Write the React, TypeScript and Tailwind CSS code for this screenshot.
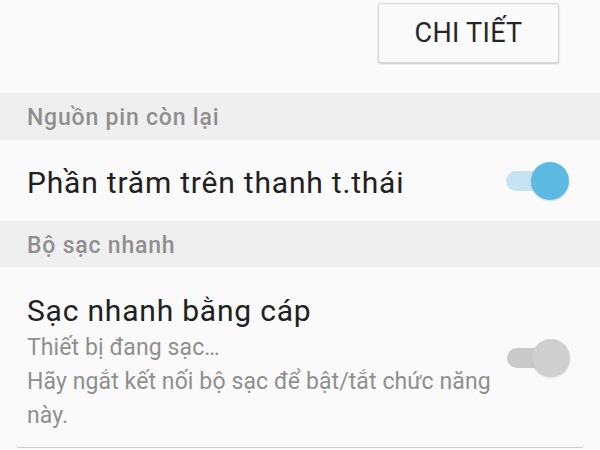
import React from "react";

function Toggle({ on }: { on: boolean }) {
  return (
    <div className="relative w-[64px] h-[38px] shrink-0">
      <div
        className={`absolute left-0 top-[9px] w-[44px] h-[20px] rounded-full ${
          on ? "bg-[#c4e4f2]" : "bg-[#c9c9c9]"
        }`}
      />
      <div
        className={`absolute left-[25px] top-0 w-[38px] h-[38px] rounded-full ${
          on ? "bg-[#5cb9e1] shadow-[0_1px_2px_rgba(0,0,0,0.15)]" : "bg-[#cfcfcf] shadow-[0_1px_2px_rgba(0,0,0,0.12)]"
        }`}
      />
    </div>
  );
}

export default function App() {
  return (
    <div
      className="w-[600px] h-[450px] overflow-hidden bg-[#fafafa] flex flex-col"
      style={{ fontFamily: "Roboto, 'Noto Sans', sans-serif" }}
    >
      <div className="h-[93px] shrink-0 flex justify-end items-start pr-[41px] pt-[3px]">
        <div className="w-[181px] h-[60px] rounded-[3px] border border-[#d4d4d4] bg-[#fafafa] shadow-[0_1px_2px_rgba(0,0,0,0.2)] flex items-center justify-center text-[27px] text-[#262626] tracking-[0.3px]">
          CHI TIẾT
        </div>
      </div>
      <div className="h-[47px] shrink-0 bg-[#efefef] flex items-center pl-[27px] pt-[4px] text-[23px] font-medium tracking-[0.8px] text-[#8f8f8f]">
        Nguồn pin còn lại
      </div>
      <div className="h-[81px] shrink-0 flex items-center justify-between pl-[27px] pr-[30px]">
        <span className="text-[30px] tracking-[0.8px] text-[#212121] pt-[3px]">Phần trăm trên thanh t.thái</span>
        <Toggle on />
      </div>
      <div className="h-[46px] shrink-0 bg-[#efefef] flex items-center pl-[27px] pt-[4px] text-[23px] font-medium tracking-[0.8px] text-[#8f8f8f]">
        Bộ sạc nhanh
      </div>
      <div className="flex items-start justify-between pl-[27px] pr-[30px] pt-[23px]">
        <div className="flex flex-col">
          <span className="text-[30px] leading-[42px] tracking-[0.8px] text-[#212121]">Sạc nhanh bằng cáp</span>
          <span className="text-[23px] leading-[34px] tracking-[0.1px] text-[#8f8f8f] w-[480px] -mt-[1px]">
            Thiết bị đang sạc…
            <br />
            Hãy ngắt kết nối bộ sạc để bật/tắt chức năng này.
          </span>
        </div>
        <div className="mt-[49px]">
          <Toggle on={false} />
        </div>
      </div>
      <div className="mx-[17px] mt-[14px] border-t border-[#cfcfcf]" />
    </div>
  );
}
